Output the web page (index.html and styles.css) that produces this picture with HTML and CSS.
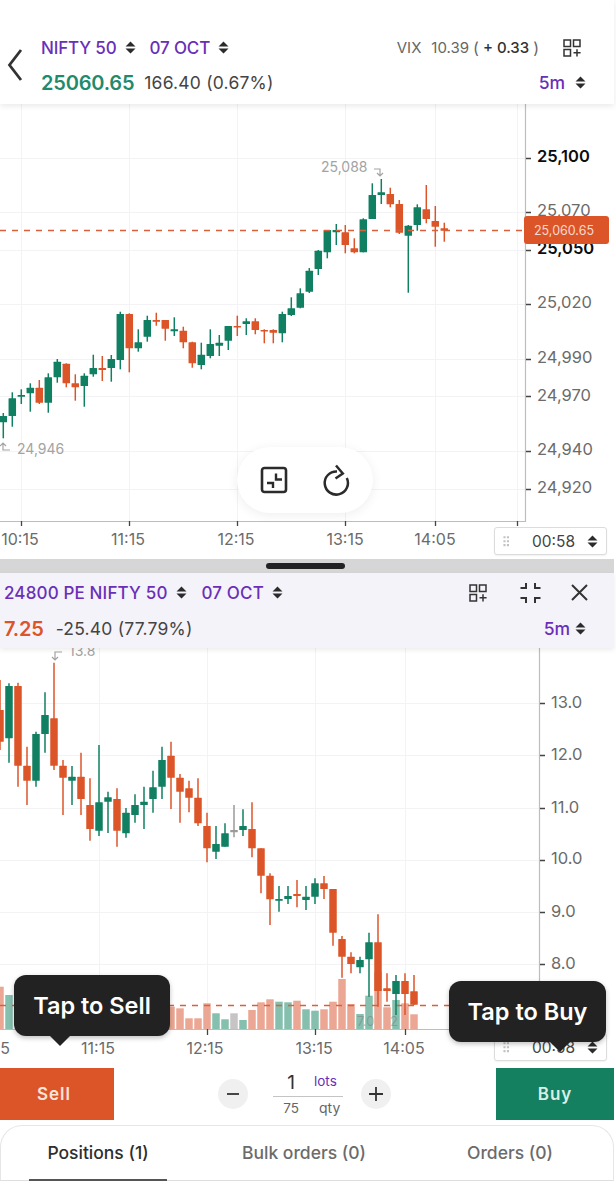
FILE: index.html
```html
<!DOCTYPE html>
<html lang="en">
<head>
<meta charset="utf-8">
<title>NIFTY 50 chart</title>
<link rel="stylesheet" href="styles.css">
</head>
<body>
<svg class="defs" width="0" height="0" aria-hidden="true">
  <symbol id="updown" viewBox="0 0 11 13"><path d="M5.5 0.5 10.5 5.5H0.5zM5.5 12.5 0.5 7.5H10.5z"/></symbol>
  <symbol id="layout" viewBox="0 0 18 18"><path d="M1 1H7.5V7.5H1zM10.5 1H17V7.5H10.5zM1 10.5H7.5V17H1zM10.5 13.7H17.6M14 10.2V17.4" fill="none" stroke="currentColor" stroke-width="1.5"/></symbol>
  <symbol id="dots" viewBox="0 0 8 13"><path d="M0.5 0.5h2.4v2.4H0.5zM4.5 0.5h2.4v2.4H4.5zM0.5 5h2.4v2.4H0.5zM4.5 5h2.4v2.4H4.5zM0.5 9.5h2.4v2.4H0.5zM4.5 9.5h2.4v2.4H4.5z"/></symbol>
</svg>
<div class="app">
  <header class="hdr">
    <div class="back">
      <svg width="16" height="34" viewBox="0 0 16 34"><path d="M14 2 2.500 17 14 32" fill="none" stroke="#333" stroke-width="2.800"/></svg>
    </div>
    <div class="hdr-body">
      <div class="row">
        <span class="sym">NIFTY 50</span><svg class="ud ud-sym"><use href="#updown"/></svg>
        <span class="sym sym-exp">07 OCT</span><svg class="ud ud-exp"><use href="#updown"/></svg>
        <span class="vix"><span class="vix-k">VIX</span><span class="vix-v">10.39</span><span class="vix-p">(</span><b class="vix-b">+ 0.33</b><span class="vix-p">)</span></span>
        <svg class="ico-layout"><use href="#layout"/></svg>
      </div>
      <div class="row">
        <span class="ltp ltp-up">25060.65</span>
        <span class="chg">166.40 (0.67%)</span>
        <span class="tf tf-top">5m</span><svg class="ud ud-tf"><use href="#updown"/></svg>
      </div>
    </div>
  </header>

  <section class="chart chart-top">
    <svg class="plot" id="plot-top" width="614" height="455" viewBox="0 104 614 455">
      <g class="grid">
        <path d="M21.500 104V521M129.500 104V521M237.500 104V521M345.500 104V521M435.500 104V521M517.500 104V521"/>
        <path d="M0 158.500H525M0 212.500H525M0 250.500H525M0 304.500H525M0 359.500H525M0 396.500H525M0 451.500H525M0 489.500H525"/>
      </g>
      <g id="candles-top"></g>
      <path class="last-line" d="M0 230.500H525"/>
      <path class="axis" d="M525.500 104V521.500H0"/>
      <path class="tick" d="M21.500 521V526M129.500 521V526M237.500 521V526M345.500 521V526M435.500 521V526M517.500 521V526M526 158.500H531M526 212.500H531M526 250.500H531M526 304.500H531M526 359.500H531M526 396.500H531M526 451.500H531M526 489.500H531"/>
      <text class="py strong" x="537" y="161.500">25,100</text>
      <text class="py" x="537" y="215.500">25,070</text>
      <text class="py strong" x="537" y="253.500">25,050</text>
      <text class="py" x="537" y="307.500">25,020</text>
      <text class="py" x="537" y="362.500">24,990</text>
      <text class="py" x="537" y="400.500">24,970</text>
      <text class="py" x="537" y="454.500">24,940</text>
      <text class="py" x="537" y="492.500">24,920</text>
      <text class="tx" x="20" y="544.500">10:15</text>
      <text class="tx" x="128" y="544.500">11:15</text>
      <text class="tx" x="236" y="544.500">12:15</text>
      <text class="tx" x="345" y="544.500">13:15</text>
      <text class="tx" x="435" y="544.500">14:05</text>
      <text class="hl" x="321" y="172">25,088</text>
      <path class="hl-arrow" d="M374 169H380V176M377 173 380 176 383 173"/>
      <text class="hl" x="17" y="454">24,946</text>
      <path class="hl-arrow" d="M10 450H3V443M0 446 3 443 6 446"/>
    </svg>
    <div class="price-tag">25,060.65</div>
    <div class="tools">
      <svg class="tool" width="28" height="28" viewBox="0 0 28 28"><rect x="2" y="2" width="24" height="24" rx="2.500" fill="none" stroke="#2b2b2b" stroke-width="2.600"/><path d="M16 7.500V13.500H22M7 17H13V22" fill="none" stroke="#2b2b2b" stroke-width="2.400"/></svg>
      <svg class="tool" width="32" height="36" viewBox="320 459 32 36"><path d="M346.800 475A11.600 11.600 0 1 1 337 468.400M336 462.500 342.800 470.500 335.500 475.500" fill="none" stroke="#2b2b2b" stroke-width="2.500"/></svg>
    </div>
    <div class="timebox timebox-top">
      <svg class="dots"><use href="#dots"/></svg><span class="time">00:58</span><svg class="ud"><use href="#updown"/></svg>
    </div>
  </section>

  <div class="divider"><span class="handle"></span></div>

  <header class="panel">
    <div class="row row-panel row-panel-a">
      <span class="sym">24800 PE NIFTY 50</span><svg class="ud ud-sym2"><use href="#updown"/></svg>
      <span class="sym sym-exp2">07 OCT</span><svg class="ud ud-exp"><use href="#updown"/></svg>
      <svg class="ico-layout ico-layout2"><use href="#layout"/></svg>
      <svg class="ico-collapse" width="21" height="20" viewBox="0 0 21 20"><path d="M0.500 5H6V0M15 0V5H20.500M0.500 15H6V20M15 20V15H20.500" fill="none" stroke="#333" stroke-width="2"/></svg>
      <svg class="ico-close" width="17" height="17" viewBox="0 0 17 17"><path d="M1 1 16 16M16 1 1 16" fill="none" stroke="#333" stroke-width="2"/></svg>
    </div>
    <div class="row row-panel">
      <span class="ltp ltp-down">7.25</span>
      <span class="chg chg2">-25.40 (77.79%)</span>
      <span class="tf tf-panel">5m</span><svg class="ud ud-tf2"><use href="#updown"/></svg>
    </div>
  </header>

  <section class="chart chart-bottom">
    <svg class="plot" id="plot-bottom" width="614" height="420" viewBox="0 648 614 420">
      <g class="grid">
        <path d="M99.500 648V1029M207.500 648V1029M315.500 648V1029M405.500 648V1029"/>
        <path d="M0 703.500H539M0 755.500H539M0 808.500H539M0 860.500H539M0 912.500H539M0 964.500H539"/>
      </g>
      <g id="volume"></g>
      <text class="ghost" x="357" y="1026">7.0</text>
      <text class="ghost" x="390" y="1026">2</text>
      <path class="last-line" d="M0 1005.500H539"/>
      <g id="candles-bottom"></g>
      <path class="axis" d="M539.500 648V1029.500H0"/>
      <path class="tick" d="M99.500 1029V1035M207.500 1029V1035M315.500 1029V1035M405.500 1029V1035M540 703.500H545M540 755.500H545M540 808.500H545M540 860.500H545M540 912.500H545M540 964.500H545"/>
      <text class="py" x="551" y="707.500">13.0</text>
      <text class="py" x="551" y="759.500">12.0</text>
      <text class="py" x="551" y="812.500">11.0</text>
      <text class="py" x="551" y="863.500">10.0</text>
      <text class="py" x="551" y="916.500">9.0</text>
      <text class="py" x="551" y="968.500">8.0</text>
      <text class="tx" x="5" y="1054">5</text>
      <text class="tx" x="98" y="1054">11:15</text>
      <text class="tx" x="205" y="1054">12:15</text>
      <text class="tx" x="314" y="1054">13:15</text>
      <text class="tx" x="404" y="1054">14:05</text>
      <text class="hl" x="69" y="656">13.8</text>
      <path class="hl-arrow" d="M62 652H55V660M52 657 55 660 58 657"/>
    </svg>
    <div class="timebox timebox-bottom">
      <svg class="dots"><use href="#dots"/></svg><span class="time">00:58</span><svg class="ud"><use href="#updown"/></svg>
    </div>
  </section>

  <div class="order">
    <button class="trade sell">Sell</button>
    <span class="step step-minus"><svg width="12" height="12" viewBox="0 0 12 12"><path d="M0 6H12" stroke="#333" stroke-width="1.800"/></svg></span>
    <div class="qty">
      <div class="qty-top"><span class="qty-num">1</span><span class="qty-lots">lots</span></div>
      <div class="qty-bot"><span class="qty-sub">75</span><span class="qty-unit">qty</span></div>
    </div>
    <span class="step step-plus"><svg width="14" height="14" viewBox="0 0 14 14"><path d="M0 7H14M7 0V14" stroke="#333" stroke-width="1.800"/></svg></span>
    <button class="trade buy">Buy</button>
  </div>

  <nav class="tabs">
    <span class="tab active">Positions (1)</span>
    <span class="tab">Bulk orders (0)</span>
    <span class="tab">Orders (0)</span>
  </nav>

  <div class="tip tip-sell">Tap to Sell</div>
  <div class="tip tip-buy">Tap to Buy</div>
</div>
<script src="chart.js"></script>
</body>
</html>
```
FILE: styles.css
```css
* { box-sizing: border-box; }
html, body { margin: 0; padding: 0; background: #fff; }
body { font-family: Inter, "Noto Sans", "Liberation Sans", sans-serif; color: #333; width: 616px; height: 1186px; overflow: hidden; }
.defs { position: absolute; }
.app { position: relative; width: 614px; height: 1186px; display: flex; flex-direction: column; }

.hdr { height: 104px; padding-top: 30px; display: flex; background: #fff; box-shadow: 0 2px 6px rgba(0,0,0,.09); position: relative; z-index: 2; }
.back { width: 41px; padding: 18px 0 0 7px; }
.hdr-body { flex: 1; display: flex; flex-direction: column; }
.row { display: flex; align-items: center; height: 35px; }

.sym { font-size: 17px; font-weight: 500; color: #6a2fb8; letter-spacing: -.15px; white-space: nowrap; }
.sym-exp { margin-left: 14px; }
.sym-exp2 { margin-left: 15px; }
.ud { width: 11px; height: 13px; fill: #2b2b2b; flex: none; }
.ud-sym { margin-left: 8px; }
.ud-exp { margin-left: 8px; }
.ud-sym2 { margin-left: 8px; }
.vix { margin-left: auto; margin-right: 20px; font-size: 15px; color: #666; display: flex; align-items: center; white-space: nowrap; }
.vix-v { margin-left: 10px; }
.vix-p { margin-left: 4px; margin-right: 4px; font-size: 16px; }
.vix-b { font-weight: 500; color: #333; }
.ico-layout { width: 18px; height: 18px; color: #333; margin-right: 33px; flex: none; }

.ltp { font-size: 20px; font-weight: 600; letter-spacing: -.2px; }
.ltp-up { color: #1f8a6c; }
.ltp-down { color: #dc5529; }
.chg { margin-left: 10px; font-size: 17.500px; color: #444; letter-spacing: .2px; white-space: nowrap; }
.chg2 { margin-left: 12px; }
.tf { margin-left: auto; font-size: 17.500px; font-weight: 500; color: #6a2fb8; }
.tf-top { margin-right: 10px; }
.ud-tf { margin-right: 28px; }
.tf-panel { margin-right: 5px; }
.ud-tf2 { margin-right: 28px; }

.chart { position: relative; overflow: hidden; background: #fff; }
.chart-top { height: 455px; }
.chart-bottom { height: 420px; }
.plot { display: block; overflow: hidden; }
.grid path { fill: none; stroke: #f3f3f5; stroke-width: 1; }
.axis { fill: none; stroke: #bdbdbd; stroke-width: 1.200; }
.tick { fill: none; stroke: #444; stroke-width: 1.300; }
.last-line { fill: none; stroke: #d9603a; stroke-width: 1.600; stroke-dasharray: 6 6; }
.py { font-size: 16.500px; fill: #6b6b6b; }
.py.strong { fill: #0c0c0c; font-weight: 600; }
.tx { font-size: 16px; fill: #6b6b6b; text-anchor: middle; }
.hl { font-size: 14px; fill: #a3a3a3; }
.hl-arrow { fill: none; stroke: #a3a3a3; stroke-width: 1.200; }
.ghost { font-size: 13px; fill: #777; opacity: .45; }
.wick-up { stroke: #117f61; stroke-width: 1.500; }
.wick-down { stroke: #dc5529; stroke-width: 1.500; }
.wick-flat { stroke: #9a9a9a; stroke-width: 1.500; }
.body-up { fill: #117f61; }
.body-down { fill: #dc5529; }
.body-flat { fill: #9a9a9a; }
.vol-up { fill: #85bfae; }
.vol-down { fill: #eca794; }
.vol-flat { fill: #c6c4c4; }

.price-tag { position: absolute; left: 524px; top: 112px; width: 85px; height: 28px; border-radius: 3px; background: #dc5529; color: #f6d9ce; font-size: 12.500px; display: flex; align-items: center; justify-content: center; padding-right: 5px; }
.tools { position: absolute; left: 237px; top: 343px; width: 136px; height: 66px; border-radius: 33px; background: #fff; box-shadow: 0 2px 12px rgba(0,0,0,.07); display: flex; align-items: center; padding-left: 23px; gap: 32px; }
.timebox { position: absolute; width: 113px; height: 28px; background: #fff; border: 1px solid #dcdcdc; border-radius: 3px; box-shadow: 0 1px 2px rgba(0,0,0,.06); display: flex; align-items: center; padding: 0 8px; }
.timebox-top { left: 494px; bottom: 4px; }
.timebox-bottom { left: 494px; bottom: 7px; }
.dots { width: 8px; height: 13px; fill: #c2c2c2; }
.time { margin-left: 22px; margin-right: 12px; font-size: 15.500px; color: #444; }

.divider { height: 14px; background: #d6d6d6; display: flex; align-items: center; justify-content: center; padding-right: 3px; }
.handle { width: 79px; height: 6px; border-radius: 3px; background: #222; }

.panel { height: 75px; padding-top: 1px; background: #f4f3fa; box-shadow: 0 2px 5px rgba(0,0,0,.08); position: relative; z-index: 2; }
.row-panel { padding-left: 4px; height: 35px; }
.row-panel-a { height: 37px; }
.row-panel .sym { letter-spacing: .15px; }
.ico-layout2 { margin-left: auto; margin-right: 0; }
.ico-collapse { margin-left: 33px; }
.ico-close { margin-left: 30px; margin-right: 26px; }

.order { height: 52px; display: flex; align-items: center; background: #fff; }
.trade { border: 0; height: 52px; font-family: inherit; font-size: 17px; font-weight: 600; letter-spacing: 1px; padding: 0; }
.sell { width: 114px; background: #dc5529; color: #fbe4db; padding-right: 6px; }
.buy { width: 118px; background: #14805f; color: #d9efe7; margin-left: 105px; }
.step { width: 30px; height: 30px; border-radius: 50%; background: #f0f0f0; display: flex; align-items: center; justify-content: center; }
.step-minus { margin-left: 104px; }
.step-plus { margin-left: 18px; }
.qty { width: 70px; margin-left: 25px; display: flex; flex-direction: column; }
.qty-top { height: 27px; display: flex; align-items: center; border-bottom: 1px solid #c4c4c4; }
.qty-bot { height: 22px; display: flex; align-items: center; }
.qty-num { width: 36px; text-align: center; font-size: 19px; color: #333; }
.qty-lots { font-size: 13.500px; color: #6a2fb8; margin-left: 5px; margin-bottom: 4px; }
.qty-sub { width: 36px; text-align: center; font-size: 13.500px; color: #666; }
.qty-unit { font-size: 14px; color: #666; margin-left: 10px; }

.tabs { margin-top: 5px; height: 56px; border: 1px solid #e6e6e6; border-bottom-color: #dedede; border-radius: 22px 22px 0 0; display: flex; gap: 68px; padding-left: 28px; background: #fff; }
.tab { width: 138px; height: 55px; display: flex; align-items: center; justify-content: center; font-size: 17.500px; font-weight: 500; color: #6b6b6b; white-space: nowrap; border-bottom: 2px solid transparent; }
.tab.active { color: #2e2e2e; border-bottom-color: #555; }

.tip { position: absolute; height: 61px; border-radius: 12px; background: #222; color: #fff; font-size: 23.500px; font-weight: 600; display: flex; align-items: center; justify-content: center; box-shadow: 0 2px 5px rgba(0,0,0,.25); z-index: 3; }
.tip::after { content: ""; position: absolute; top: 59px; border-left: 12px solid transparent; border-right: 12px solid transparent; border-top: 12px solid #222; }
.tip-sell { left: 14px; top: 975px; width: 156px; }
.tip-sell::after { left: 34px; }
.tip-buy { left: 449px; top: 981px; width: 157px; }
.tip-buy::after { left: 99px; }
```
FILE: chart.js
```js
(function () {
// [x, kind, wickTop, bodyTop, bodyBottom, wickBottom]
var U = 'up', D = 'down', F = 'flat';
var upper = [
[3.3,U,413,416,422.3,438.3],[12.3,U,392.3,398.3,416,426.7],[21.3,U,389.3,395,396.7,404],[30.3,U,383.3,387.7,393.3,411.7],
[39.3,D,380,387.7,402.7,404],[48.3,U,373.3,377.3,402.7,412.7],[57.3,U,359,361.7,377.3,382.7],[66.3,D,363.3,363.7,383.3,387.3],
[75.3,D,374.3,383.3,387.3,400.7],[84.3,U,373.3,375.7,386,406.7],[93.3,U,354.7,368,374.3,376.7],[102.3,D,356,368,370,381],
[111.3,U,355,359,368,381.7],[120.3,U,311.7,314,360,369.3],[129.3,D,313.3,314,348.3,372.3],[138.3,U,329.3,342.3,348.3,351.7],
[147.3,U,315.7,320,336.7,341.7],[156.3,D,312.7,320,321.7,325.7],[165.3,D,320,320,328.7,340.7],[174.3,U,317.3,329.3,331.3,336],
[183.3,D,326.7,330.7,342.3,348.3],[192.3,D,341.7,342.3,363.3,367.7],[201.3,U,342.7,354.7,365,369.3],[210.3,U,329.3,344,356,358.3],
[219.3,U,335,342.7,345.7,356],[228.3,U,326,326,340.7,350],[237.3,D,315.7,326,327.3,336],[246.3,U,318.3,321.3,324,335],
[255.3,D,318.3,321.3,330,334.3],[264.3,D,329.3,330,331.3,343.3],[273.3,D,329.3,330,332.7,343.3],[282.3,U,311.7,314,333.3,342.3],
[291.3,U,297.3,308.3,315,316],[300.3,U,288.3,293.3,307.7,308.3],[309.3,U,268,270.7,291.7,293],[318.3,U,250,250.7,269,275],
[327.3,U,230,230,252.3,258.3],[336.3,U,224,230,232.3,245],[345.3,D,225,232.3,245,253.3],[354.3,D,238.3,248.3,252.3,253.3],
[363.3,U,218.3,219.3,252.3,252.3],[372.3,U,183.3,195,219,219],[381.3,U,179,192.3,195,204],[390.3,D,187.7,194,204.3,207.3],
[399.3,D,200,204,232.7,234],[408.3,U,225,225.7,235.7,292.7],[417.3,U,204.3,207.3,225,230.7],[426.3,D,185,209.3,219,223.3],
[435.3,D,206,221,226.7,246.7],[444.3,D,222.7,228.3,230.7,241.7]
];
var lower = [
[0,D,680,710,741.7,750],[9,U,683.3,686,738.3,762.7],[18,D,682.7,686,765.7,786.7],[27,D,746.7,765.7,780.7,805],
[36,U,731.7,734,780.7,786.7],[45,U,692.3,715,734,752.7],[54,D,662.7,718.3,765.7,770],[63,D,760,765.7,777.7,815],
[72,U,766,776.7,780.7,805],[81,D,752.7,776.7,799,815],[90,D,778.3,805,829,840.7],[99,U,745,802.3,830.7,836],
[108,U,791.7,797.3,801.7,833],[117,D,788.3,799,830.7,846.7],[126,U,808,812.7,833.3,837.7],[135,U,794.3,805,815,822.7],
[144,U,786.7,801.7,805,829],[153,U,770.7,787.3,799,812.7],[162,U,746.7,760,786.7,799],[171,D,741.7,755.7,777.7,809],
[180,D,774,777.7,791.7,822.7],[189,D,780.7,788.3,797.7,812.3],[198,D,778.3,797.7,823.3,826],[207,D,812.7,826,848.3,862.3],
[216,U,826,844,851.7,859],[225,U,823.3,833.3,846.7,846.7],[234,F,805,830,832.3,837.3],[243,U,809.3,826,830,836],
[252,D,802.3,829,848.3,857.3],[261,D,848.3,848.3,875.7,893.3],[270,D,873.3,875.7,899.3,925],[279,U,886,899,900.7,911.7],
[288,U,886,896,899,904],[297,D,880,894,896,907.3],[306,U,886,896.7,900,910],[315,U,878.3,883.3,896.7,904],
[324,D,876,883.3,889,899],[333,D,889,889,932.7,945.7],[342,D,936,939,956.7,977.7],[351,D,952.3,956.7,964,973.3],
[360,U,956.7,960,967.3,973.3],[369,U,932.7,942.3,959.3,996.7],[378,D,914.3,942.3,991,1006.7],[387,D,973.3,988.3,991,1001.7],
[396,U,975,981,994,1015],[405,D,973.3,981,994,1015],[414,D,975,991.3,1004.7,1005]
];
// [x, kind, top]
var vol = [
[0,D,986.7],[9,U,995],[162,D,1010],[171,D,1006.7],[180,D,1008.3],[189,D,1018.3],[198,D,1018.3],[207,D,1003.3],[216,U,1013.3],
[225,U,1019.3],[234,F,1013.3],[243,U,1020],[252,D,1010],[261,D,1002.3],[270,D,999.3],[279,U,1001.7],[288,U,1002.3],[297,D,1000.7],
[306,U,1009.3],[315,U,1010.7],[324,D,1009.3],[333,D,1001.7],[342,D,979],[351,D,1004],[360,U,1014],[369,U,995.7],[378,D,972.3],
[387,D,1007.3],[396,U,1000],[405,D,1003.3],[414,D,1014.3]
];
var NS = 'http://www.w3.org/2000/svg';
function el(parent, name, attrs) {
  var n = document.createElementNS(NS, name);
  for (var k in attrs) n.setAttribute(k, attrs[k]);
  parent.appendChild(n);
}
function drawCandles(id, data) {
  var g = document.getElementById(id);
  data.forEach(function (c) {
    el(g, 'line', { 'class': 'wick-' + c[1], x1: c[0], x2: c[0], y1: c[2], y2: c[5] });
    el(g, 'rect', { 'class': 'body-' + c[1], x: c[0] - 3.75, width: 7.5, y: c[3], height: Math.max(c[4] - c[3], 1.5), rx: 0.5 });
  });
}
drawCandles('candles-top', upper);
drawCandles('candles-bottom', lower);
var vg = document.getElementById('volume');
vol.forEach(function (v) {
  el(vg, 'rect', { 'class': 'vol-' + v[1], x: v[0] - 3.75, width: 7.5, y: v[2], height: 1029.3 - v[2] });
});
})();
```
